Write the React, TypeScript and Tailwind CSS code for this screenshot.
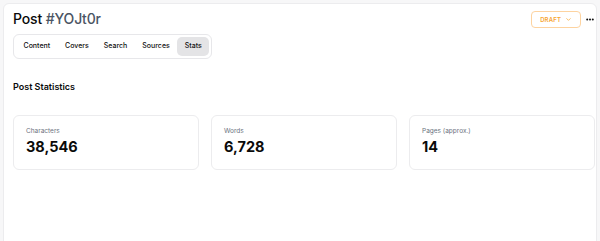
import React from 'react';

const tabs = ['Content', 'Covers', 'Search', 'Sources', 'Stats'];

const stats = [
  { label: 'Characters', value: '38,546' },
  { label: 'Words', value: '6,728' },
  { label: 'Pages (approx.)', value: '14' },
];

export default function App() {
  return (
    <div className="h-[241px] w-[600px] overflow-hidden bg-[#f7f7f8] pl-[3px] pr-[3px] pt-[3px] font-['Inter',sans-serif]">
      <div className="h-[260px] rounded-md border border-[#ececee] bg-white pl-[9px] pr-[1px] pt-[5px]">
        {/* Header */}
        <div className="flex items-start justify-between pr-[1px]">
          <div className="flex flex-col">
            <h1 className="text-[14px] font-medium leading-[20px] tracking-[-0.01em] text-[#0a0a0a]">
              Post <span className="text-[#4b5563]">#YOJt0r</span>
            </h1>
            <div className="mt-[5px] flex w-fit items-center rounded-md border border-[#e7e7ea] p-[2px]">
              {tabs.map((t) => (
                <button
                  key={t}
                  className={`h-[19px] rounded-[5px] px-[7.5px] text-[7px] font-medium text-[#111] ${
                    t === 'Stats' ? 'bg-[#e4e4e6]' : ''
                  }`}
                >
                  {t}
                </button>
              ))}
            </div>
          </div>
          <div className="mt-[2px] flex items-center gap-[5px]">
            <button className="flex h-[17px] items-center gap-[4px] rounded-[4px] border border-[#fdd3a0] px-[8px] text-[6px] font-semibold tracking-wide text-[#f7a531]">
              DRAFT
              <svg width="7" height="7" viewBox="0 0 24 24" fill="none" stroke="currentColor" strokeWidth="2.5" strokeLinecap="round" strokeLinejoin="round">
                <path d="m6 9 6 6 6-6" />
              </svg>
            </button>
            <svg width="8" height="3" viewBox="0 0 8 3" className="text-[#111]">
              <circle cx="1.2" cy="1.5" r="1" fill="currentColor" />
              <circle cx="4" cy="1.5" r="1" fill="currentColor" />
              <circle cx="6.8" cy="1.5" r="1" fill="currentColor" />
            </svg>
          </div>
        </div>

        <h2 className="mt-[22px] text-[9px] font-semibold leading-[12px] text-[#0a0a0a]">Post Statistics</h2>

        <div className="mt-[22px] grid grid-cols-3 gap-[12px]">
          {stats.map((s) => (
            <div key={s.label} className="h-[55px] rounded-md border border-[#ececee] px-[12px] pt-[11px]">
              <div className="text-[6.5px] leading-[9px] text-[#6b7280]">{s.label}</div>
              <div className="mt-[1px] text-[14.5px] font-bold leading-[19px] text-[#0a0a0a]">{s.value}</div>
            </div>
          ))}
        </div>
      </div>
    </div>
  );
}
